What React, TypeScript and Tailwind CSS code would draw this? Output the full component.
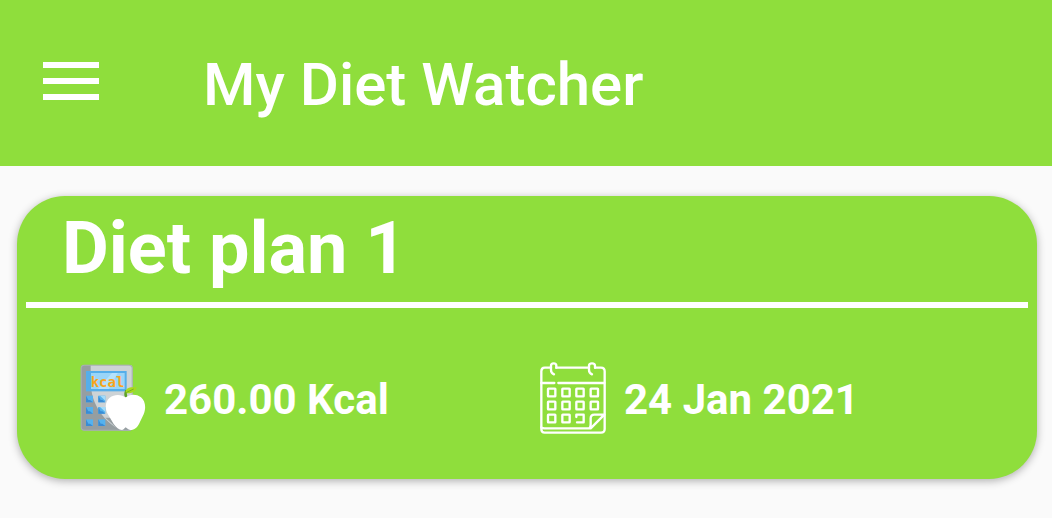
function CaloriesIcon() {
  return (
    <svg viewBox="24 21 198 216" className="h-18 w-16.5 shrink-0" aria-hidden="true">
      <defs>
        <clipPath id="calculator-body">
          <rect x="26" y="29" width="156" height="198" rx="11" />
        </clipPath>
      </defs>
      <g clipPath="url(#calculator-body)">
        <rect x="26" y="29" width="156" height="198" fill="#969ea1" />
        <path d="M56 29H182V227H150C100 205 56 150 56 80Z" fill="#cdd3d6" />
        <path d="M100 188Q122 206 140 227H182V190Z" fill="#969ea1" />
        <rect x="26" y="29" width="156" height="198" rx="11" fill="none" stroke="#a9b1b3" strokeWidth="6" />
      </g>
      <rect x="42" y="48" width="122" height="61" fill="#55aeea" />
      <path d="M57 54H158V102H57Z" fill="#9ad5f8" />
      <path d="M120 54H137L110 102H78Z" fill="#b5e2fb" />
      {[122, 156, 193].map((y) =>
        [42, 79].map((x) => (
          <g key={`${x}-${y}`}>
            <rect x={x} y={y} width="21" height="20" fill="#55b2ee" />
            <path d={`M${x} ${y}V${y + 20}H${x + 21}L${x + 12} ${y + 13}H${x + 7}Z`} fill="#398cd5" />
          </g>
        )),
      )}
      <path d="M84 122H100V137ZM84 156H100V171Z" fill="#a2dcfa" />
      <text x="56" y="95" fontSize="42" className="fill-[#f8a51b] font-['DejaVu_Sans_Mono',monospace] font-bold">
        kcal
      </text>
      <path d="M159 126C155 120 157 108 161 104L166 107C164 113 164 119 167 126Z" fill="#5da326" />
      <path d="M161 111C162 99 170 95 194 97C190 110 180 116 163 115Z" fill="#a9d91c" />
      <path d="M162 113L185 102" stroke="#76b51c" strokeWidth="3" />
      <path
        d="M161 128C150 118 127 117 113 128C100 139 98 158 106 175L125 207C132 217 141 225 150 225C156 225 157 219 161 217C165 219 168 225 175 225C188 225 195 218 201 207L215 178C223 158 220 138 207 127C193 117 173 117 161 128Z"
        fill="white"
      />
    </svg>
  );
}

function CalendarIcon() {
  const days = [48, 91, 133, 176];
  return (
    <svg
      viewBox="24 21 198 216"
      className="h-18 w-16.5 shrink-0"
      fill="none"
      stroke="white"
      strokeWidth="7"
      strokeLinecap="round"
      strokeLinejoin="round"
      aria-hidden="true"
    >
      <path d="M57 38H38Q28 38 28 49V222Q28 233 38 233H207Q218 233 218 222V49Q218 38 207 38H190M73 38H171" />
      <path d="M28 84H67M79 84H217" />
      <path d="M66 58Q57 54 57 45V32Q57 25 65 25T73 32M180 58Q171 54 171 45V32Q171 25 180 25T189 32V38M73 32V38" />
      {[101, 140].map((y) =>
        days.map((x) => <rect key={`${x}-${y}`} x={x} y={y} width="22" height="23" rx="1" />),
      )}
      <rect x="48" y="179" width="22" height="23" rx="1" />
      <rect x="91" y="179" width="22" height="23" rx="1" />
      <path d="M133 186V179H155V202H135" />
      <path d="M28 217Q30 220 38 220H172Q176 216 176 208V190Q176 179 187 179H217M217 179L176 220" />
    </svg>
  );
}

export default function App() {
  return (
    <div className="min-h-screen bg-[#fafafa] font-[Roboto,sans-serif] text-white">
      <header className="flex items-center gap-26 bg-[#8fde3c] px-[43px] pt-[49px] pb-[45px]">
        <button type="button" aria-label="Open menu" className="mb-2 flex w-14 shrink-0 flex-col gap-2.5">
          <span className="h-1.5 w-full bg-white" />
          <span className="h-1.5 w-full bg-white" />
          <span className="h-1.5 w-full bg-white" />
        </button>
        <h1 className="text-[60px] leading-[72px] font-medium">My Diet Watcher</h1>
      </header>
      <main className="pt-[30px] pr-[15px] pb-9 pl-[17px]">
        <article className="rounded-[48px] bg-[#8fde3c] px-[9px] pt-[11px] pb-[43px] shadow-[0_2px_8px_rgba(0,0,0,0.3)]">
          <h2 className="px-9 text-[72px] leading-[84px] font-bold">Diet plan 1</h2>
          <hr className="mt-[11px] h-1.5 border-0 bg-white" />
          <div className="grid grid-cols-2 pt-[54px] pr-7 pl-[54px] text-[42px] leading-[72px] font-bold">
            <div className="flex items-start gap-4.5">
              <CaloriesIcon />
              <p className="pt-0.5">260.00 Kcal</p>
            </div>
            <div className="flex items-start gap-4.5">
              <CalendarIcon />
              <p className="pt-0.5">24 Jan 2021</p>
            </div>
          </div>
        </article>
      </main>
    </div>
  );
}
